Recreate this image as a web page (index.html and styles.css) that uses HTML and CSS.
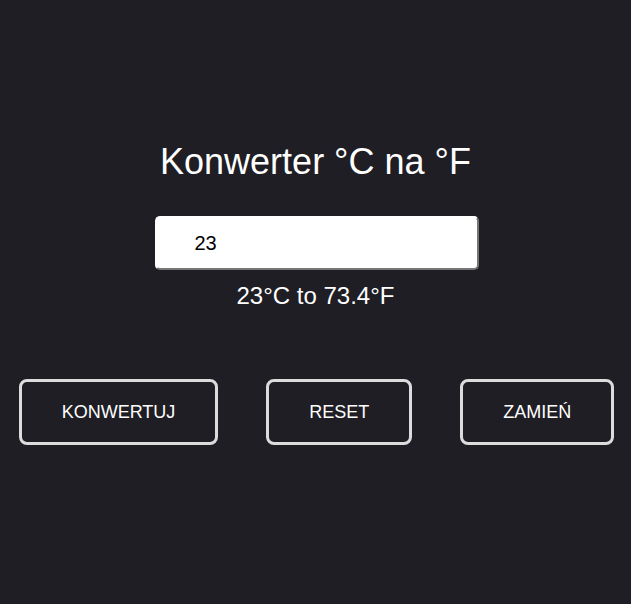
FILE: index.html
```html
<!DOCTYPE html>
<html lang="pl">
<head>
<meta charset="utf-8">
<title>Konwerter °C na °F</title>
<link rel="stylesheet" href="styles.css">
</head>
<body>
<main class="app">
  <h1 class="title">Konwerter °C na °F</h1>
  <input class="temp-input" type="text" value="23">
  <p class="result">23°C to 73.4°F</p>
  <div class="actions">
    <button class="btn">KONWERTUJ</button>
    <button class="btn">RESET</button>
    <button class="btn">ZAMIEŃ</button>
  </div>
</main>
</body>
</html>
```
FILE: styles.css
```css
html, body {
  margin: 0;
  padding: 0;
  background: #1e1e24;
  height: 100%;
}
body {
  font-family: "Liberation Sans", Arial, sans-serif;
  color: #ffffff;
}
.app {
  display: flex;
  flex-direction: column;
  align-items: center;
  padding-top: 141px;
}
.title {
  margin: 0;
  font-size: 36px;
  line-height: 42px;
  font-weight: normal;
}
.temp-input {
  box-sizing: border-box;
  margin-top: 33px;
  margin-left: 2px;
  width: 324px;
  height: 54px;
  padding: 0 0 0 38px;
  border: 2px solid;
  border-color: #ffffff #767676 #767676 #ffffff;
  border-radius: 5px;
  background: #ffffff;
  color: #000000;
  font-family: "Liberation Sans", Arial, sans-serif;
  font-size: 20px;
  outline: none;
}
.result {
  margin: 12px 0 0;
  font-size: 24px;
  line-height: 28px;
}
.actions {
  display: flex;
  gap: 48px;
  margin-top: 69px;
  margin-left: 2px;
}
.btn {
  background: transparent;
  border: 3px solid #dcdcdc;
  border-radius: 8px;
  color: #ffffff;
  font-family: "Liberation Sans", Arial, sans-serif;
  font-size: 18px;
  line-height: 20px;
  padding: 20px 40px;
  cursor: pointer;
}
```
